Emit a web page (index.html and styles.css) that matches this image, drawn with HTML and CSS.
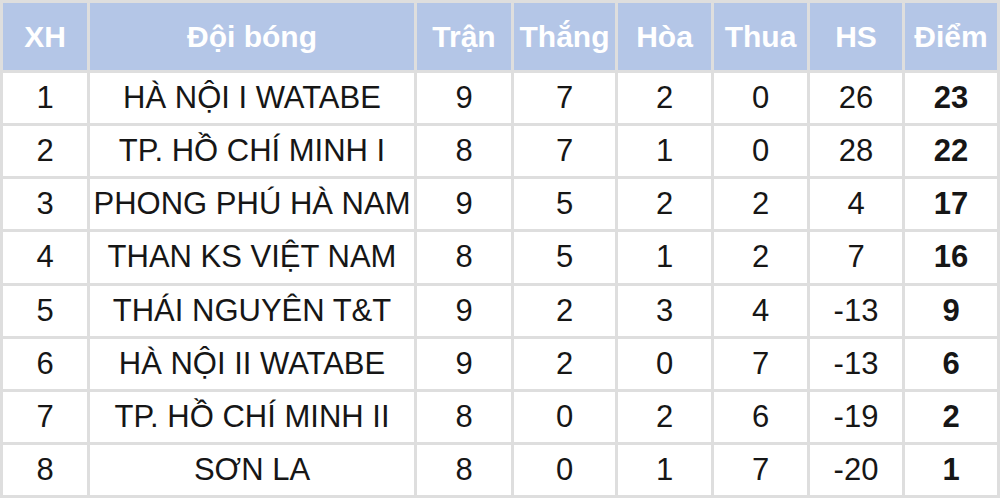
FILE: index.html
```html
<!DOCTYPE html>
<html lang="vi">
<head>
<meta charset="utf-8">
<title>Bảng xếp hạng</title>
<link rel="stylesheet" href="styles.css">
</head>
<body>
<table class="standings">
  <colgroup>
    <col class="c-rank">
    <col class="c-team">
    <col class="c-played">
    <col class="c-won">
    <col class="c-draw">
    <col class="c-lost">
    <col class="c-diff">
    <col class="c-pts">
  </colgroup>
  <thead>
    <tr>
      <th>XH</th><th>Đội bóng</th><th>Trận</th><th>Thắng</th><th>Hòa</th><th>Thua</th><th>HS</th><th>Điểm</th>
    </tr>
  </thead>
  <tbody>
    <tr><td>1</td><td>HÀ NỘI I WATABE</td><td>9</td><td>7</td><td>2</td><td>0</td><td>26</td><td class="pts">23</td></tr>
    <tr><td>2</td><td>TP. HỒ CHÍ MINH I</td><td>8</td><td>7</td><td>1</td><td>0</td><td>28</td><td class="pts">22</td></tr>
    <tr><td>3</td><td>PHONG PHÚ HÀ NAM</td><td>9</td><td>5</td><td>2</td><td>2</td><td>4</td><td class="pts">17</td></tr>
    <tr><td>4</td><td>THAN KS VIỆT NAM</td><td>8</td><td>5</td><td>1</td><td>2</td><td>7</td><td class="pts">16</td></tr>
    <tr><td>5</td><td>THÁI NGUYÊN T&amp;T</td><td>9</td><td>2</td><td>3</td><td>4</td><td>-13</td><td class="pts">9</td></tr>
    <tr><td>6</td><td>HÀ NỘI II WATABE</td><td>9</td><td>2</td><td>0</td><td>7</td><td>-13</td><td class="pts">6</td></tr>
    <tr><td>7</td><td>TP. HỒ CHÍ MINH II</td><td>8</td><td>0</td><td>2</td><td>6</td><td>-19</td><td class="pts">2</td></tr>
    <tr><td>8</td><td>SƠN LA</td><td>8</td><td>0</td><td>1</td><td>7</td><td>-20</td><td class="pts">1</td></tr>
  </tbody>
</table>
</body>
</html>
```
FILE: styles.css
```css
html, body {
  margin: 0;
  padding: 0;
  background: #ffffff;
}

.standings {
  width: 1000px;
  height: 498px;
  table-layout: fixed;
  border-collapse: separate;
  border-spacing: 3px;
  background: #dedede;
  font-family: "Liberation Sans", Arial, sans-serif;
  font-size: 31px;
  color: #161616;
}

.c-rank { width: 84px; }
.c-team { width: 324px; }
.c-played { width: 94px; }
.c-won { width: 101px; }
.c-draw { width: 93px; }
.c-lost { width: 93px; }
.c-diff { width: 92px; }
.c-pts { width: 92px; }

.standings th,
.standings td {
  padding: 0;
  text-align: center;
  vertical-align: middle;
  white-space: nowrap;
}

.standings th {
  height: 67px;
  background: #b4c6e7;
  color: #ffffff;
  font-weight: bold;
  font-size: 30px;
}

.standings td {
  height: 50px;
  background: #ffffff;
}

.standings td.pts {
  font-weight: bold;
}
```
